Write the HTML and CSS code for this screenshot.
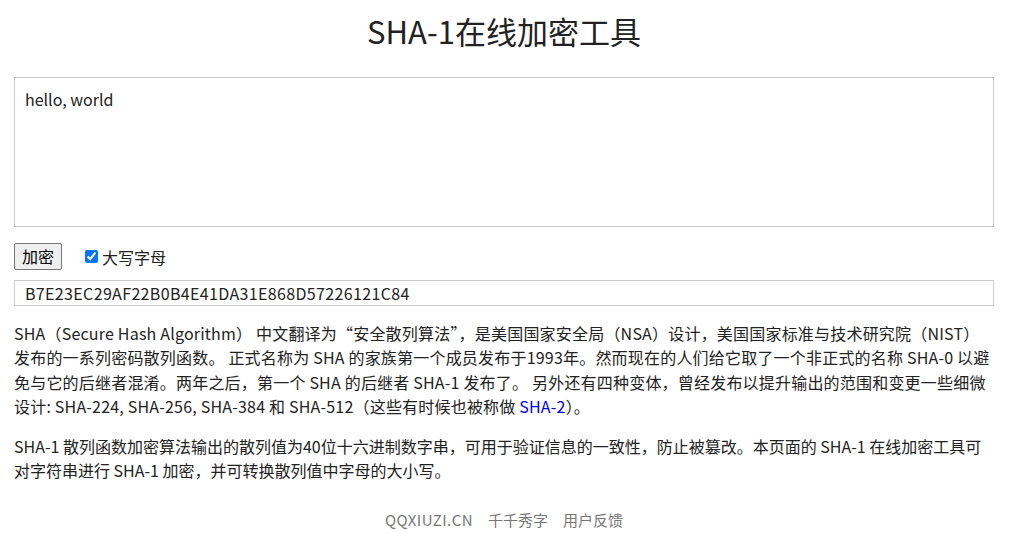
FILE: index.html
```html
<!DOCTYPE html>
<html lang="zh-CN">
<head>
<meta charset="utf-8">
<title>SHA-1在线加密工具</title>
<link rel="stylesheet" href="styles.css">
</head>
<body>
<div class="page">
  <h1 class="title">SHA-1在线加密工具</h1>
  <textarea class="input-area">hello, world</textarea>
  <div class="controls">
    <button class="btn" type="button">加密</button>
    <label class="check"><input type="checkbox" checked>大写字母</label>
  </div>
  <input class="output" type="text" value="B7E23EC29AF22B0B4E41DA31E868D57226121C84">
  <p class="desc desc-intro">SHA（Secure Hash Algorithm） 中文翻译为“安全散列算法”，是美国国家安全局（NSA）设计，美国国家标准与技术研究院（NIST）发布的一系列密码散列函数。 正式名称为 SHA 的家族第一个成员发布于1993年。然而现在的人们给它取了一个非正式的名称 SHA-0 以避免与它的后继者混淆。两年之后，第一个 SHA 的后继者 SHA-1 发布了。 另外还有四种变体，曾经发布以提升输出的范围和变更一些细微设计: SHA-224, SHA-256, SHA-384 和 SHA-512（这些有时候也被称做 <a class="link" href="#">SHA-2</a>）。</p>
  <p class="desc">SHA-1 散列函数加密算法输出的散列值为40位十六进制数字串，可用于验证信息的一致性，防止被篡改。本页面的 SHA-1 在线加密工具可对字符串进行 SHA-1 加密，并可转换散列值中字母的大小写。</p>
  <div class="footer">
    <span>QQXIUZI.CN</span>
    <span>千千秀字</span>
    <span>用户反馈</span>
  </div>
</div>
</body>
</html>
```
FILE: styles.css
```css
html, body {
  margin: 0;
  padding: 0;
  background: #fff;
}
body {
  font-family: "Noto Sans CJK SC", sans-serif;
  color: #222;
}
.page {
  width: 980px;
  padding: 0 14px;
  display: flex;
  flex-direction: column;
}
.title {
  margin: 0;
  padding-top: 9px;
  height: 77px;
  box-sizing: border-box;
  font-size: 31px;
  font-weight: normal;
  line-height: 44px;
  text-align: center;
  color: #222;
}
.input-area {
  display: block;
  width: 980px;
  height: 150px;
  box-sizing: border-box;
  border: 1px solid #ccc;
  padding: 10px;
  margin: 0;
  resize: none;
  font-family: inherit;
  font-size: 16px;
  line-height: 22px;
  color: #222;
  outline: none;
}
.controls {
  display: flex;
  align-items: center;
  gap: 23px;
  margin-top: 16px;
  height: 27px;
}
.btn {
  height: 27px;
  width: 48px;
  padding: 0;
  font-family: inherit;
  font-size: 16px;
  line-height: 25px;
  border: 1px solid #767676;
  border-radius: 2px;
  background: #efefef;
  color: #000;
}
.check {
  display: flex;
  align-items: center;
  font-size: 16px;
  color: #222;
}
.check input {
  margin: 0 4px 0 0;
  width: 13px;
  height: 13px;
}
.output {
  display: block;
  margin-top: 10px;
  width: 980px;
  height: 26px;
  box-sizing: border-box;
  border: 1px solid #ccc;
  padding: 0 10px;
  font-family: inherit;
  font-size: 16px;
  letter-spacing: 0.35px;
  color: #222;
  outline: none;
}
.desc {
  margin: 15px 0 0;
  font-size: 16px;
  line-height: 24.3px;
  color: #222;
}
.desc-intro {
  letter-spacing: 0.2px;
}
.desc + .desc {
  margin-top: 16px;
}
.link {
  color: #00e;
  text-decoration: none;
}
.footer {
  margin-top: 27px;
  display: flex;
  justify-content: center;
  gap: 15px;
  font-size: 15px;
  line-height: 20px;
  color: #777;
}
.footer span:first-child {
  letter-spacing: 0.4px;
}
```
